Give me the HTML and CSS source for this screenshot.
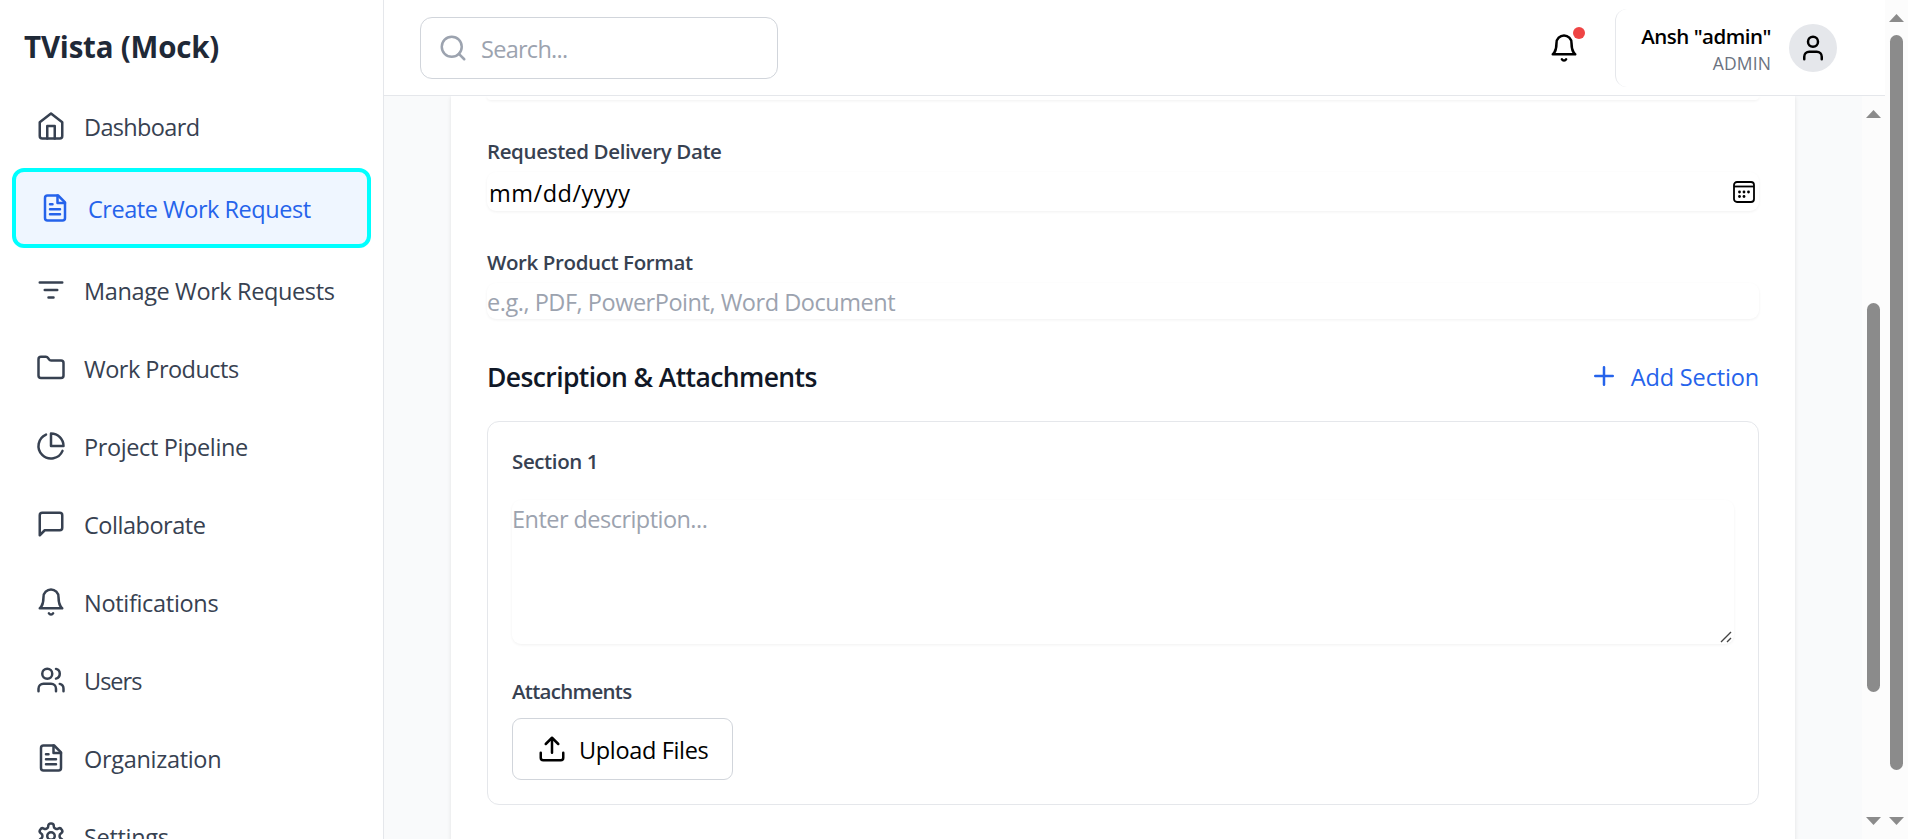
FILE: index.html
```html
<!DOCTYPE html>
<html lang="en">
<head>
<meta charset="utf-8">
<title>TVista (Mock)</title>
<link rel="stylesheet" href="styles.css">
</head>
<body>
<div class="app">
  <aside class="sidebar">
    <h1 class="brand">TVista (Mock)</h1>
    <nav class="nav">
      <a class="nav-item"><svg class="icon" viewBox="0 0 24 24"><path d="m3 9 9-7 9 7v11a2 2 0 0 1-2 2H5a2 2 0 0 1-2-2z"/><path d="M9 22V12h6v10"/></svg><span class="nav-label ls-6">Dashboard</span></a>
      <a class="nav-item active"><svg class="icon" viewBox="0 0 24 24"><path d="M14.500 2H6a2 2 0 0 0-2 2v16a2 2 0 0 0 2 2h12a2 2 0 0 0 2-2V7.500L14.500 2z"/><path d="M14 2v6h6M16 13H8M16 17H8M10 9H8"/></svg><span class="nav-label">Create Work Request</span></a>
      <a class="nav-item"><svg class="icon" viewBox="0 0 24 24"><path d="M3 6h18M7 12h10M10 18h4"/></svg><span class="nav-label ls-4">Manage Work Requests</span></a>
      <a class="nav-item"><svg class="icon" viewBox="0 0 24 24"><path d="M4 20h16a2 2 0 0 0 2-2V8a2 2 0 0 0-2-2h-7.930a2 2 0 0 1-1.660-.900l-.820-1.200A2 2 0 0 0 7.930 3H4a2 2 0 0 0-2 2v13c0 1.100.900 2 2 2Z"/></svg><span class="nav-label ls-5">Work Products</span></a>
      <a class="nav-item"><svg class="icon" viewBox="0 0 24 24"><path d="M21.210 15.890A10 10 0 1 1 8 2.830"/><path d="M22 12A10 10 0 0 0 12 2v10z"/></svg><span class="nav-label ls-4">Project Pipeline</span></a>
      <a class="nav-item"><svg class="icon" viewBox="0 0 24 24"><path d="M21 15a2 2 0 0 1-2 2H7l-4 4V5a2 2 0 0 1 2-2h14a2 2 0 0 1 2 2z"/></svg><span class="nav-label">Collaborate</span></a>
      <a class="nav-item"><svg class="icon" viewBox="0 0 24 24"><path d="M6 8a6 6 0 0 1 12 0c0 7 3 9 3 9H3s3-2 3-9"/><path d="M10.300 21a1.940 1.940 0 0 0 3.400 0"/></svg><span class="nav-label ls-3">Notifications</span></a>
      <a class="nav-item"><svg class="icon" viewBox="0 0 24 24"><path d="M16 21v-2a4 4 0 0 0-4-4H6a4 4 0 0 0-4 4v2"/><circle cx="9" cy="7" r="4"/><path d="M22 21v-2a4 4 0 0 0-3-3.870M16 3.130a4 4 0 0 1 0 7.750"/></svg><span class="nav-label ls-10">Users</span></a>
      <a class="nav-item"><svg class="icon" viewBox="0 0 24 24"><path d="M14.500 2H6a2 2 0 0 0-2 2v16a2 2 0 0 0 2 2h12a2 2 0 0 0 2-2V7.500L14.500 2z"/><path d="M14 2v6h6M16 13H8M16 17H8M10 9H8"/></svg><span class="nav-label ls-3">Organization</span></a>
      <a class="nav-item"><svg class="icon" viewBox="0 0 24 24"><path d="M12.220 2h-.440a2 2 0 0 0-2 2v.180a2 2 0 0 1-1 1.730l-.430.250a2 2 0 0 1-2 0l-.150-.080a2 2 0 0 0-2.730.730l-.220.380a2 2 0 0 0 .730 2.730l.150.100a2 2 0 0 1 1 1.720v.510a2 2 0 0 1-1 1.740l-.150.090a2 2 0 0 0-.730 2.730l.220.380a2 2 0 0 0 2.730.730l.150-.080a2 2 0 0 1 2 0l.430.250a2 2 0 0 1 1 1.730V20a2 2 0 0 0 2 2h.440a2 2 0 0 0 2-2v-.180a2 2 0 0 1 1-1.730l.430-.250a2 2 0 0 1 2 0l.150.080a2 2 0 0 0 2.730-.730l.220-.390a2 2 0 0 0-.730-2.730l-.150-.080a2 2 0 0 1-1-1.740v-.500a2 2 0 0 1 1-1.740l.150-.090a2 2 0 0 0 .730-2.730l-.220-.380a2 2 0 0 0-2.730-.730l-.150.080a2 2 0 0 1-2 0l-.430-.250a2 2 0 0 1-1-1.730V4a2 2 0 0 0-2-2z"/><circle cx="12" cy="12" r="3"/></svg><span class="nav-label ls-3">Settings</span></a>
    </nav>
  </aside>

  <div class="page">
    <header class="header">
      <div class="search"><svg class="icon" viewBox="0 0 24 24"><circle cx="11" cy="11" r="8"/><path d="m21 21-4.300-4.300"/></svg><span class="search-text">Search...</span></div>
      <div class="header-right">
        <div class="bell"><svg class="icon" viewBox="0 0 24 24"><path d="M6 8a6 6 0 0 1 12 0c0 7 3 9 3 9H3s3-2 3-9"/><path d="M10.300 21a1.940 1.940 0 0 0 3.400 0"/></svg><span class="badge"></span></div>
        <div class="profile">
          <div class="who"><span class="who-name">Ansh "admin"</span><span class="who-role">ADMIN</span></div>
          <div class="avatar"><svg class="icon" viewBox="0 0 24 24"><path d="M19 21v-2a4 4 0 0 0-4-4H9a4 4 0 0 0-4 4v2"/><circle cx="12" cy="7" r="4"/></svg></div>
        </div>
      </div>
    </header>

    <div class="body">
      <main class="main">
        <div class="card">
          <div class="field field-cut"></div>
          <div class="label">Requested Delivery Date</div>
          <div class="field date"><span class="date-text">mm/dd/yyyy</span>
            <svg class="calendar" viewBox="0 0 22 22"><rect x="1" y="1" width="20" height="20" rx="3"/><path d="M1 5.500h20"/><g class="dots"><circle cx="6.500" cy="11" r="1.400"/><circle cx="11" cy="11" r="1.400"/><circle cx="15.500" cy="11" r="1.400"/><circle cx="6.500" cy="15.500" r="1.400"/><circle cx="11" cy="15.500" r="1.400"/></g></svg>
          </div>
          <div class="label">Work Product Format</div>
          <div class="field format">e.g., PDF, PowerPoint, Word Document</div>
          <div class="row">
            <h2 class="heading">Description &amp; Attachments</h2>
            <a class="add"><svg class="icon" viewBox="0 0 24 24"><path d="M5 12h14M12 5v14"/></svg><span>Add Section</span></a>
          </div>
          <section class="section">
            <div class="section-title">Section 1</div>
            <div class="field area"><span>Enter description...</span>
              <svg class="grip" viewBox="0 0 12 12"><path d="M1 11 11 1M7 11l4-4"/></svg>
            </div>
            <div class="section-title attach">Attachments</div>
            <a class="upload"><svg class="icon" viewBox="0 0 24 24"><path d="M12 15V3M7 8l5-5 5 5M21 15v4a2 2 0 0 1-2 2H5a2 2 0 0 1-2-2v-4"/></svg><span>Upload Files</span></a>
          </section>
        </div>
      </main>
      <div class="scrollbar scrollbar-inner"><span class="arrow up"></span><span class="thumb"></span><span class="arrow down"></span></div>
    </div>
  </div>
  <div class="scrollbar scrollbar-outer"><span class="arrow up"></span><span class="thumb"></span><span class="arrow down"></span></div>
</div>
</body>
</html>
```
FILE: styles.css
```css
* { box-sizing: border-box; }
body {
  margin: 0;
  font: 400 23.5px/36px "Open Sans", "Noto Sans", sans-serif;
  letter-spacing: -0.47px;
  color: #000;
  overflow: hidden;
}
h1, h2 { margin: 0; }
.app { display: flex; height: 839px; overflow: hidden; background: #fff; }
.icon {
  width: 30px; height: 30px; flex: none;
  fill: none; stroke: currentColor; stroke-width: 2;
  stroke-linecap: round; stroke-linejoin: round;
}

/* Sidebar */
.sidebar { width: 384px; flex: none; border-right: 1px solid #e5e7eb; overflow: hidden; }
.brand {
  height: 90px; padding: 26px 24px 0;
  font-size: 29.5px; line-height: 42px; font-weight: 700;
  letter-spacing: -0.2px; color: #1f2937;
}
.nav { display: flex; flex-direction: column; gap: 6px; padding: 0 12px; }
.nav-item {
  display: flex; align-items: center; gap: 18px; flex: none;
  height: 72px; padding: 0 24px; border-radius: 12px; color: #374151;
}
.nav-item.active {
  height: 80px; width: 359px; border: 4px solid #0ff;
  background: #eff6ff; color: #2563eb;
}
.nav-label { margin-top: 2px; white-space: nowrap; }
.ls-3 { letter-spacing: -0.31px; }
.ls-4 { letter-spacing: -0.38px; }
.ls-5 { letter-spacing: -0.52px; }
.ls-6 { letter-spacing: -0.65px; }
.ls-10 { letter-spacing: -1px; }

/* Header */
.page { flex: 1; min-width: 0; display: flex; flex-direction: column; }
.header {
  height: 96px; flex: none; border-bottom: 1px solid #e5e7eb;
  display: flex; align-items: center; justify-content: space-between; padding: 1px 36px 0;
}
.search {
  display: flex; align-items: center; gap: 13px;
  width: 358px; height: 62px; padding-left: 17px;
  border: 1px solid #d1d5db; border-radius: 12px; color: #9ca3af;
}
.search-text { margin-top: 2px; letter-spacing: -0.72px; }
.header-right { display: flex; align-items: center; gap: 36px; }
.bell { position: relative; width: 30px; height: 30px; display: flex; }
.badge {
  position: absolute; top: -6px; right: -6px;
  width: 12px; height: 12px; border-radius: 50%; background: #ef4444;
}
.profile {
  display: flex; align-items: center; gap: 18px;
  width: 234px; height: 78px; padding: 0 12px 0 24px;
  border-left: 1px solid #e5e7eb; border-radius: 12px;
}
.who { flex: 1; display: flex; flex-direction: column; align-items: flex-end; }
.who-name { font-size: 20.5px; line-height: 30px; font-weight: 600; letter-spacing: -0.5px; white-space: nowrap; }
.who-role { font-size: 17.5px; line-height: 24px; letter-spacing: 0.15px; color: #6b7280; }
.avatar {
  width: 48px; height: 48px; border-radius: 50%; background: #e5e7eb;
  display: flex; align-items: center; justify-content: center;
}

/* Form */
.body { flex: 1; min-height: 0; display: flex; }
.main { flex: 1; min-width: 0; padding: 0 67px; background: #f9fafb; overflow: hidden; }
.card { height: 760px; padding: 0 36px; background: #fff; box-shadow: 0 1px 4px rgba(0, 0, 0, .1); }
.field { border-radius: 9px; box-shadow: 0 1px 3px rgba(0, 0, 0, .06); }
.field-cut { height: 4px; border-radius: 0 0 9px 9px; margin-bottom: 36px; }
.label, .section-title {
  font-size: 20.5px; line-height: 30px; font-weight: 600; letter-spacing: -0.39px; color: #374151;
}
.label { height: 30px; margin-bottom: 6px; }
.date {
  height: 39px; margin-bottom: 36px; padding: 0 4px 0 2px;
  display: flex; align-items: center; justify-content: space-between;
}
.date-text { margin-top: 2px; letter-spacing: 0.5px; }
.calendar { width: 22px; height: 22px; fill: none; stroke: #000; stroke-width: 1.8; }
.dots { fill: #000; stroke: none; }
.format { height: 36px; margin-bottom: 36px; padding-top: 1px; color: #9ca3af; }
.row { height: 42px; margin-bottom: 24px; display: flex; align-items: center; justify-content: space-between; }
.heading { font-size: 26.5px; line-height: 42px; font-weight: 600; letter-spacing: -0.61px; color: #111827; margin-top: 1px; }
.add { display: flex; align-items: center; gap: 12px; color: #2563eb; letter-spacing: -0.15px; }
.add span { margin-top: 2px; }
.section { height: 384px; padding: 24px; border: 1px solid #e5e7eb; border-radius: 12px; }
.area {
  position: relative; height: 144px; margin-top: 24px; padding-top: 1px;
  color: #9ca3af; letter-spacing: -0.54px;
}
.grip { position: absolute; right: 2px; bottom: 1px; width: 12px; height: 12px; fill: none; stroke: #444; stroke-width: 1.4; }
.attach { margin: 32px 0 12px; letter-spacing: -0.72px; }
.upload {
  display: flex; align-items: center; gap: 12px;
  width: 221px; height: 62px; padding-left: 24px;
  border: 1px solid #d1d5db; border-radius: 9px; letter-spacing: -0.34px;
}
.upload span { margin-top: 2px; white-space: nowrap; }

/* Scrollbars */
.scrollbar {
  width: 23px; flex: none; background: #fcfcfc;
  display: flex; flex-direction: column; align-items: center;
  padding: 14px 0;
}
.arrow { width: 15px; height: 8px; background: #8b8b8b; }
.up { clip-path: polygon(50% 0, 100% 100%, 0 100%); }
.down { clip-path: polygon(0 0, 100% 0, 50% 100%); margin-top: auto; }
.thumb { width: 13px; border-radius: 7px; background: #8b8b8b; }
.scrollbar-inner .thumb { height: 389px; margin-top: 185px; }
.scrollbar-outer .thumb { height: 735px; margin-top: 13px; }
```
